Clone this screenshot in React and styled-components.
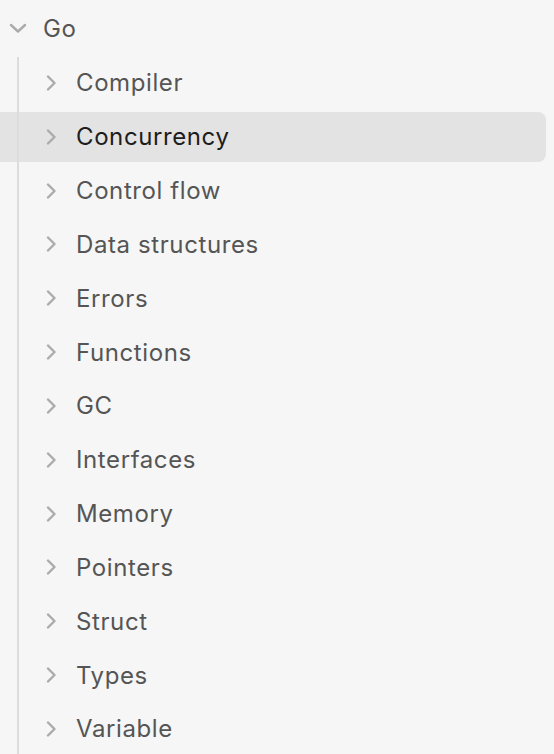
import styled, { createGlobalStyle } from 'styled-components';

const GlobalStyle = createGlobalStyle`
  html, body {
    margin: 0;
    padding: 0;
    background: #f6f6f6;
  }
  body {
    font-family: Inter, "Noto Sans", sans-serif;
    -webkit-font-smoothing: antialiased;
  }
`;

const Tree = styled.div`
  width: 554px;
  height: 754px;
  overflow: hidden;
  padding-top: 1px;
  box-sizing: border-box;
`;

const RootRow = styled.div`
  display: flex;
  align-items: center;
  height: 54px;
  padding-left: 9px;
  font-size: 24px;
  color: #555;
`;

const Children = styled.div`
  position: relative;
  display: flex;
  flex-direction: column;
  margin-top: 1px;

  &::before {
    content: '';
    position: absolute;
    left: 17px;
    top: 1px;
    bottom: -40px;
    width: 2px;
    background: #dcdcdc;
    z-index: 1;
  }
`;

const Row = styled.div`
  height: 53.83px;
  padding: 2px 8px 2px 0;
  box-sizing: border-box;
`;

const RowInner = styled.div`
  display: flex;
  align-items: center;
  height: 100%;
  padding-left: 45px;
  border-radius: 0 8px 8px 0;
  background: ${(p) => (p.$active ? '#e3e3e3' : 'transparent')};
  color: ${(p) => (p.$active ? '#1d1d1d' : '#555')};
  font-size: 24px;
`;

const Chevron = styled.svg`
  flex: none;
  width: ${(p) => p.$w}px;
  height: ${(p) => p.$h}px;
  margin-right: ${(p) => p.$gap}px;
  color: #ababab;
`;

const Label = styled.span`
  letter-spacing: 0.6px;
`;

const items = [
  'Compiler',
  'Concurrency',
  'Control flow',
  'Data structures',
  'Errors',
  'Functions',
  'GC',
  'Interfaces',
  'Memory',
  'Pointers',
  'Struct',
  'Types',
  'Variable',
];

const ChevronDown = () => (
  <Chevron $w={18} $h={10} $gap={16} viewBox="0 0 18 10" fill="none">
    <path d="M2 2l7 6.5L16 2" stroke="currentColor" strokeWidth="2.4" strokeLinecap="round" strokeLinejoin="round" />
  </Chevron>
);

const ChevronRight = () => (
  <Chevron $w={14} $h={16} $gap={17} viewBox="0 0 14 16" fill="none">
    <path d="M3 1.5l6.5 6.5L3 14.5" stroke="currentColor" strokeWidth="2.4" strokeLinecap="round" strokeLinejoin="round" />
  </Chevron>
);

export default function App() {
  return (
    <>
      <GlobalStyle />
      <Tree>
        <RootRow>
          <ChevronDown />
          <Label>Go</Label>
        </RootRow>
        <Children>
          {items.map((name) => (
            <Row key={name}>
              <RowInner $active={name === 'Concurrency'}>
                <ChevronRight />
                <Label>{name}</Label>
              </RowInner>
            </Row>
          ))}
        </Children>
      </Tree>
    </>
  );
}
